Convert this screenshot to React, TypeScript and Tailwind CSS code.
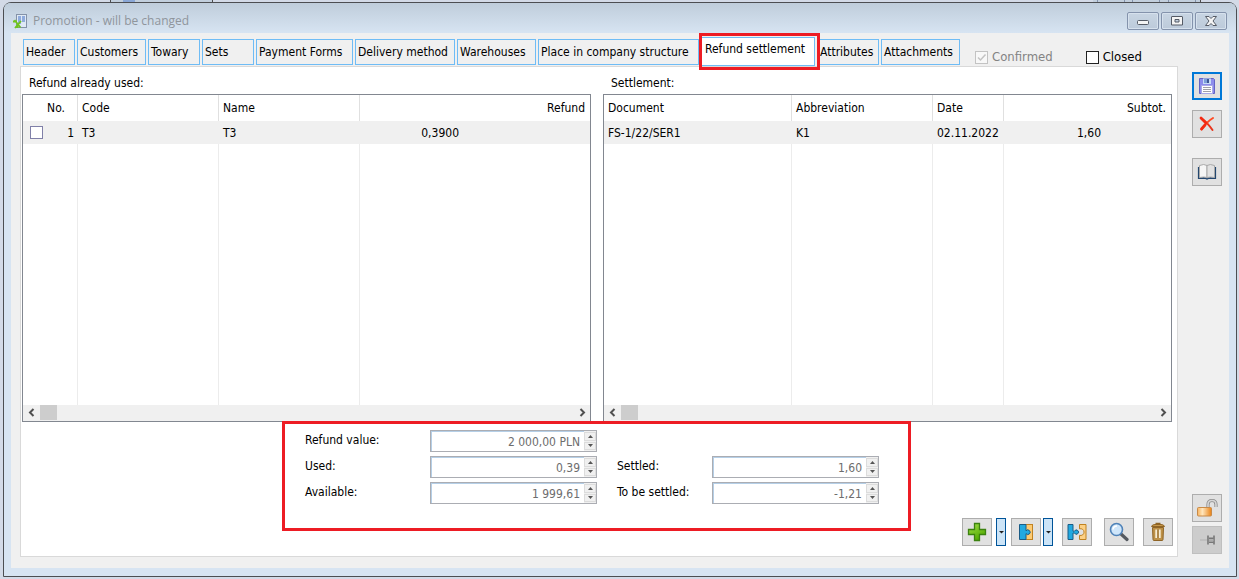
import type { ReactNode } from 'react';
import clsx from 'clsx';

interface Tab {
  label: string;
  width: string;
  active?: boolean;
}

interface Column {
  label: string;
  width: string;
  align?: string;
}

const tabs: Tab[] = [
  { label: 'Header', width: 'w-[52px]' },
  { label: 'Customers', width: 'w-[69px]' },
  { label: 'Towary', width: 'w-[52px]' },
  { label: 'Sets', width: 'w-[52px]' },
  { label: 'Payment Forms', width: 'w-[97px]' },
  { label: 'Delivery method', width: 'w-[100px]' },
  { label: 'Warehouses', width: 'w-[79px]' },
  { label: 'Place in company structure', width: 'w-[161px]' },
  { label: 'Refund settlement', width: 'w-[114px]', active: true },
  { label: 'Attributes', width: 'w-[62px]' },
  { label: 'Attachments', width: 'w-[79px]' },
];

const refundColumns: Column[] = [
  { label: 'No.', width: 'w-[55px]', align: 'text-right pr-3' },
  { label: 'Code', width: 'w-[141px]' },
  { label: 'Name', width: 'w-[141px]' },
  { label: 'Refund', width: '', align: 'text-right pr-[5px]' },
];

const settlementColumns: Column[] = [
  { label: 'Document', width: 'w-[188px]' },
  { label: 'Abbreviation', width: 'w-[141px]' },
  { label: 'Date', width: 'w-[71px]' },
  { label: 'Subtot.', width: '', align: 'text-right pr-[5px]' },
];

const AppIcon = () => (
  <svg width="14" height="15" viewBox="0 0 14 15" className="shrink-0">
    <rect x="3.5" y="0.5" width="10" height="13" fill="#dfe9f5" stroke="#8492a8" />
    <path d="M5 2h3v8H5zM9 2h3v6H9z" fill="#8fabdc" />
    <path d="M1.500 6l6 7.500M8 7l-6 7M0 7.500h4M4.500 14V9" stroke="#6fc41e" strokeWidth="1.800" fill="none" />
  </svg>
);

const SaveIcon = () => (
  <svg width="16" height="16" viewBox="0 0 16 16">
    <path d="M0.5 0.5h14l1 1v14h-15z" fill="#8c8cec" stroke="#6464c4" />
    <rect x="4" y="0.5" width="8" height="5.5" fill="#c6dcf4" />
    <rect x="5" y="1" width="3" height="4" fill="#7d9fd8" />
    <rect x="8" y="1" width="2" height="4" fill="#3f5694" />
    <rect x="2.5" y="7.5" width="11" height="8" fill="#fff" stroke="#a9a9e8" />
    <path d="M4 9.5h8M4 11.5h8M4 13.5h8" stroke="#a0a0a8" />
  </svg>
);

const DeleteIcon = () => (
  <svg width="16" height="16" viewBox="0 0 16 16" fill="none" strokeLinecap="round">
    <path d="M2.5 2.5c3 2 7.500 6.500 11 11.500" stroke="#e8351c" strokeWidth="2" />
    <path d="M14 2C9 5 5.500 9 2.500 13.500" stroke="#ff4a22" strokeWidth="2" />
    <path d="M2 2l5 5M6 9l-3.500 4" stroke="#f32a12" strokeWidth="2.800" />
  </svg>
);

const BookIcon = () => (
  <svg width="20" height="18" viewBox="0 0 20 18">
    <path d="M1.500 4v11.500h7l1.500 0.500 1.500-0.500h7V4" fill="#49648c" stroke="#23476f" strokeWidth="1.200" />
    <path d="M2.500 2.500Q7 0.500 10 2.500v12Q7 13.500 2.500 14.500z" fill="#f6f6f6" stroke="#a9a9a9" />
    <path d="M17.500 2.500Q13 0.500 10 2.500v12Q13 13.500 17.500 14.500z" fill="#e2e2e2" stroke="#a9a9a9" />
  </svg>
);

const LockIcon = () => (
  <svg width="22" height="20" viewBox="0 0 22 20">
    <defs>
      <linearGradient id="lock" x1="0" x2="1">
        <stop offset="0" stopColor="#f8b25c" />
        <stop offset="0.35" stopColor="#ffe6bd" />
        <stop offset="1" stopColor="#e98216" />
      </linearGradient>
    </defs>
    <path d="M12 10V6.500Q12 2.500 16 2.500T20 6.500V9" fill="none" stroke="#8d8d8d" strokeWidth="3.200" />
    <path d="M12 10V6.500Q12 2.500 16 2.500T20 6.500V9" fill="none" stroke="#d6d6d6" strokeWidth="1.600" />
    <rect x="1.500" y="9.500" width="14" height="8.500" rx="1" fill="url(#lock)" stroke="#c88a48" />
  </svg>
);

const PinIcon = () => (
  <svg width="20" height="16" viewBox="0 0 20 16" className="ml-1 shrink-0" fill="none">
    <path d="M1 8h7" stroke="#b0b0b0" />
    <path d="M9 3.500v9M15 3.500v9" stroke="#777" strokeWidth="1.600" />
    <path d="M10 6.200h4.500M10 10.200h4.500" stroke="#777" strokeWidth="1.600" />
    <path d="M10 8.200h4.500" stroke="#aaa" strokeWidth="2" />
  </svg>
);

const PlusIcon = () => (
  <svg width="20" height="20" viewBox="0 0 20 20">
    <defs>
      <linearGradient id="plus" x1="0" y1="0" x2="0.6" y2="1">
        <stop offset="0" stopColor="#a4e04a" />
        <stop offset="1" stopColor="#4fa800" />
      </linearGradient>
    </defs>
    <path d="M7.500 1.500h5v6h6v5h-6v6h-5v-6h-6v-5h6z" fill="url(#plus)" stroke="#3c8210" strokeWidth="1.300" />
  </svg>
);

const JoinedIcon = () => (
  <svg width="16" height="18" viewBox="0 0 16 18">
    <rect x="7.500" y="1.500" width="7" height="15" fill="#fdca72" stroke="#c08221" />
    <path d="M1.500 1.500h6.500v6.300a2.300 2.300 0 1 1 0 2.800V16.500H1.500z" fill="#22a9e0" stroke="#1b5c86" />
  </svg>
);

const SplitIcon = () => (
  <svg width="20" height="18" viewBox="0 0 20 18">
    <path d="M1 1.500h5v6.700h1.500a2.100 2.100 0 1 1 0 1.800H6v6.500H1z" fill="#22a9e0" stroke="#1b5c86" />
    <path d="M12.500 1.500h6.500v15h-6.500v-4.200a3.400 3.400 0 1 0 0-6.400z" fill="#fcd085" stroke="#c08221" />
  </svg>
);

const SearchIcon = () => (
  <svg width="20" height="20" viewBox="0 0 20 20">
    <path d="M12 12l6 5.500" stroke="#555a60" strokeWidth="3.200" strokeLinecap="round" />
    <circle cx="7.500" cy="7.500" r="6" fill="#cfe6fa" stroke="#4f82b8" strokeWidth="1.600" />
    <path d="M4 7.500Q4.500 4 8 4" stroke="#fff" strokeWidth="1.500" fill="none" />
  </svg>
);

const TrashIcon = () => (
  <svg width="16" height="20" viewBox="0 0 16 20">
    <path d="M5.500 1.500h5" stroke="#8f6425" strokeWidth="1.500" />
    <path d="M1.500 4.500Q2 2.500 5 2.500h6q3 0 3.500 2z" fill="#c99a4b" stroke="#8f6425" />
    <path d="M2.500 5.500h11l-0.500 12q0 1-1 1H4q-1 0-1-1z" fill="#bd9148" stroke="#8f6425" />
    <path d="M6.300 7.500v8.500M9.700 7.500v8.500" stroke="#f7ecd2" strokeWidth="2" />
    <path d="M8 7.500v8.500" stroke="#8f6425" />
  </svg>
);

const ToolButton = ({ label, className, children }: { label: string; className?: string; children: ReactNode }) => (
  <button
    aria-label={label}
    className={clsx(
      'flex h-7 w-[30px] shrink-0 items-center justify-center',
      className ?? 'border border-[#adadad] bg-[#e1e1e1]',
    )}
  >
    {children}
  </button>
);

const MenuArrow = ({ label, className }: { label: string; className: string }) => (
  <button
    aria-label={label}
    className={clsx('flex h-7 w-[10px] shrink-0 items-center justify-center border border-[#005499] bg-[#cce4f7]', className)}
  >
    <svg width="5" height="4" viewBox="0 0 5 4" className="shrink-0">
      <path d="M0 1h5L2.500 3.500z" fill="#222" />
    </svg>
  </button>
);

const CaptionButton = ({ label, children }: { label: string; children: ReactNode }) => (
  <button
    aria-label={label}
    className="flex h-[18px] w-8 items-center justify-center rounded-xs border border-[#8493ac] bg-linear-to-b from-[#c8d5e3] to-[#bccada] shadow-[inset_0_0_0_1px_#d6e1ed]"
  >
    <svg width="14" height="10" viewBox="0 0 14 10" fill="#f4f4f4" stroke="#555b66">
      {children}
    </svg>
  </button>
);

const ScrollBar = () => (
  <div className="flex h-4 items-start justify-between bg-[#f0f0f0] pr-[3px]">
    <div className="flex h-[15px] items-center">
      <svg width="17" height="9" viewBox="0 0 17 9" fill="none" stroke="#505050" strokeWidth="2">
        <path d="M10.500 1L7 4.500 10.500 8" />
      </svg>
      <span className="h-[15px] w-[17px] bg-[#cdcdcd]" />
    </div>
    <svg width="9" height="15" viewBox="0 0 9 15" fill="none" stroke="#505050" strokeWidth="2">
      <path d="M2.500 4L6 7.500 2.500 11" />
    </svg>
  </div>
);

const DataGrid = ({ label, columns, children }: { label: string; columns: Column[]; children: ReactNode }) => (
  <div className="border border-[#828790]">
    <table aria-label={label} className="w-full table-fixed border-separate border-spacing-0">
      <thead>
        <tr className="h-[26px]">
          {columns.map((column) => (
            <th
              key={column.label}
              className={clsx(
                'border-r border-[#e0e0e0] p-0 font-normal last:border-r-0',
                column.width,
                column.align ?? 'pl-1 text-left',
              )}
            >
              {column.label}
            </th>
          ))}
        </tr>
      </thead>
      <tbody>
        <tr className="h-[23px] bg-[#f0f0f0]">{children}</tr>
        <tr className="h-[261px]">
          {columns.map((column) => (
            <td key={column.label} className="border-r border-[#ececec] last:border-r-0" />
          ))}
        </tr>
      </tbody>
    </table>
    <ScrollBar />
  </div>
);

const SpinField = ({ id, label, value }: { id: string; label: string; value: string }) => (
  <>
    <label htmlFor={id} className="pb-[2px]">{label}</label>
    <div className="flex h-[22px] border border-[#abadb3] bg-white">
      <input
        id={id}
        value={value}
        readOnly
        className="w-full min-w-0 border-t border-l border-[#b5cfe7] pr-1 text-right text-[#6d6d6d]"
      />
      <div className="flex w-3 shrink-0 flex-col gap-px bg-[#f0f0f0] py-px">
        <button aria-label={`Increase ${label}`} className="flex flex-1 items-center justify-center border border-[#dcdcdc]">
          <svg width="5" height="3" viewBox="0 0 5 3" className="shrink-0"><path d="M0 3L2.500 0 5 3z" fill="#555" /></svg>
        </button>
        <button aria-label={`Decrease ${label}`} className="flex flex-1 items-center justify-center border border-[#dcdcdc]">
          <svg width="5" height="3" viewBox="0 0 5 3" className="shrink-0"><path d="M0 0L2.500 3 5 0z" fill="#555" /></svg>
        </button>
      </div>
    </div>
  </>
);

const TitleBar = () => (
  <header className="flex h-[30px] items-start justify-between rounded-t-md bg-linear-to-b from-[#bfcddb] to-[#d7e4f2] pt-[9px] pr-[9px] pl-[9px]">
    <div className="flex items-center gap-[6px]">
      <AppIcon />
      <h1 className="font-['Open_Sans',sans-serif] text-[12px] leading-[18px] text-[#8f959c]">Promotion - will be changed</h1>
    </div>
    <div className="flex gap-[2px]">
      <CaptionButton label="Minimize">
        <rect x="1.500" y="4.500" width="11" height="4" rx="1" />
      </CaptionButton>
      <CaptionButton label="Maximize">
        <path d="M2 0.500h10q0.500 0 0.500 0.500v8H1.500V1q0-0.500 0.500-0.500zM5 3.500v2.500h4V3.500z" fillRule="evenodd" />
      </CaptionButton>
      <CaptionButton label="Close">
        <path d="M1.500 0.500h3.500L7 2.500 9 0.500h3.500L9 5l3.500 4.500H9L7 7.500 5 9.500H1.500L5 5z" />
      </CaptionButton>
    </div>
  </header>
);

const TabBar = () => (
  <div className="flex h-[33px] items-start pt-[6px] pl-3">
    <div role="tablist" className="flex shrink-0 items-start gap-[2px]">
      {tabs.map((tab) =>
        tab.active ? (
          <div key={tab.label} className="relative -mt-[2px]">
            <button
              role="tab"
              aria-selected
              className={clsx('h-[29px] border border-[#6fbcf5] bg-white pb-[6px] pl-[3px] text-left whitespace-nowrap', tab.width)}
            >
              {tab.label}
            </button>
            {/* highlight around the open tab */}
            <span className="pointer-events-none absolute -top-1 -right-[5px] -bottom-1 -left-[2px] z-10 border-3 border-[#ed1c24]" />
          </div>
        ) : (
          <button
            key={tab.label}
            role="tab"
            className={clsx(
              'h-[26px] border border-[#6fbcf5] bg-[#f0f0f0] pl-[2px] text-left whitespace-nowrap',
              tab.width,
            )}
          >
            {tab.label}
          </button>
        ),
      )}
    </div>
    <label className="mt-2 ml-[15px] flex h-[20px] items-center gap-1 text-[13px] text-[#838383]">
      <input type="checkbox" checked disabled readOnly className="peer sr-only" />
      <svg width="13" height="13" viewBox="0 0 13 13" fill="none" stroke="#c3c3c3">
        <rect x="0.500" y="0.500" width="12" height="12" fill="#f8f8f8" />
        <path d="M3 6.500l2.500 2.500L10.500 3.500" strokeWidth="1.500" />
      </svg>
      Confirmed
    </label>
    <label className="mt-2 ml-auto flex h-[20px] items-center gap-1 pr-9 text-[13px]">
      <input type="checkbox" className="size-[13px] appearance-none border border-[#222] bg-white" />
      Closed
    </label>
  </div>
);

const App = () => (
  <div className="flex min-h-screen flex-col bg-[#d3dae7] pr-[2px] pb-[2px] pl-[3px] font-['DejaVu_Sans_Condensed','DejaVu_Sans',sans-serif] text-[12px] leading-4 text-black">
    {/* edge of the window behind */}
    <div className="flex h-[2px] justify-between pr-9 pl-[107px]">
      <div className="flex w-[103px] gap-4 border-x border-[#4c4c4c] bg-[#c2cfdd] pl-3">
        <span className="w-3 bg-[#8aa7d6]" />
      </div>
      <div className="flex w-[108px] justify-around border-r border-[#4c4c4c] bg-[#c2cfdd]">
        <span className="w-7 border-x border-[#8493ac]" />
        <span className="w-7 border-x border-[#8493ac]" />
        <span className="w-7 border-x border-[#8493ac]" />
      </div>
    </div>

    <div className="flex flex-1 flex-col rounded-t-lg border border-[#4c4e52] bg-[#d7e4f2]">
      <TitleBar />
      <div className="mx-[7px] mb-2 flex flex-1 bg-[#f0f0f0]">
        <div className="flex min-w-0 flex-1 flex-col">
          <TabBar />
          <main className="mb-[11px] ml-[9px] flex flex-1 flex-col border border-[#d9d9d9] bg-white">
            <div className="flex gap-3 pr-[5px] pl-px">
              <section className="min-w-0 flex-1">
                <h2 className="h-[27px] pt-2 pl-[7px]">Refund already used:</h2>
                <DataGrid label="Refund already used" columns={refundColumns}>
                  <td className="p-0">
                    <div className="flex items-center justify-between pr-1 pl-[7px]">
                      <input type="checkbox" aria-label="Select T3" className="size-[13px] appearance-none border border-[#8080a8] bg-white" />
                      1
                    </div>
                  </td>
                  <td className="p-0 pl-1">T3</td>
                  <td className="p-0 pl-1">T3</td>
                  <td className="p-0 pr-[131px] text-right">0,3900</td>
                </DataGrid>
              </section>
              <section className="min-w-0 flex-1">
                <h2 className="h-[27px] pt-2 pl-2">Settlement:</h2>
                <DataGrid label="Settlement" columns={settlementColumns}>
                  <td className="p-0 pl-1">FS-1/22/SER1</td>
                  <td className="p-0 pl-1">K1</td>
                  <td className="p-0 pl-1">02.11.2022</td>
                  <td className="p-0 pr-[70px] text-right">1,60</td>
                </DataGrid>
              </section>
            </div>

            <div className="flex flex-1 items-start justify-between pr-1 pl-[261px]">
              <form className="relative -mt-px grid h-[110px] w-[629px] shrink-0 grid-cols-[125px_167px_95px_167px] content-start items-center gap-y-1 border-3 border-[#ed1c24] pt-[6px] pl-5">
                <SpinField id="refund-value" label="Refund value:" value="2 000,00 PLN" />
                <span className="col-span-2" />
                <SpinField id="used" label="Used:" value="0,39" />
                <div className="col-span-2 ml-5 grid grid-cols-[95px_167px] items-center">
                  <SpinField id="settled" label="Settled:" value="1,60" />
                </div>
                <SpinField id="available" label="Available:" value="1 999,61" />
                <div className="col-span-2 ml-5 grid grid-cols-[95px_167px] items-center">
                  <SpinField id="to-be-settled" label="To be settled:" value="-1,21" />
                </div>
              </form>
              <div className="flex self-end pb-[10px]">
                <ToolButton label="Add"><PlusIcon /></ToolButton>
                <MenuArrow label="Add options" className="mr-[5px] ml-1" />
                <ToolButton label="Settle"><JoinedIcon /></ToolButton>
                <MenuArrow label="Settle options" className="mr-[9px] ml-[2px]" />
                <ToolButton label="Unsettle"><SplitIcon /></ToolButton>
                <span className="w-3" />
                <ToolButton label="Preview"><SearchIcon /></ToolButton>
                <span className="w-[9px]" />
                <ToolButton label="Delete"><TrashIcon /></ToolButton>
              </div>
            </div>
          </main>
        </div>

        <aside className="flex shrink-0 flex-col pt-[39px] pr-[7px] pb-[14px] pl-[14px]">
          <ToolButton label="Save" className="border-2 border-[#0078d7] bg-[#e1e1e1]"><SaveIcon /></ToolButton>
          <span className="h-[10px]" />
          <ToolButton label="Cancel"><DeleteIcon /></ToolButton>
          <span className="h-5" />
          <ToolButton label="History"><BookIcon /></ToolButton>
          <div className="mt-auto flex flex-col gap-1">
            <ToolButton label="Unlock"><LockIcon /></ToolButton>
            <ToolButton label="Pin" className="border border-[#bfbfbf] bg-[#cccccc]"><PinIcon /></ToolButton>
          </div>
        </aside>
      </div>
    </div>
  </div>
);

export default App;
